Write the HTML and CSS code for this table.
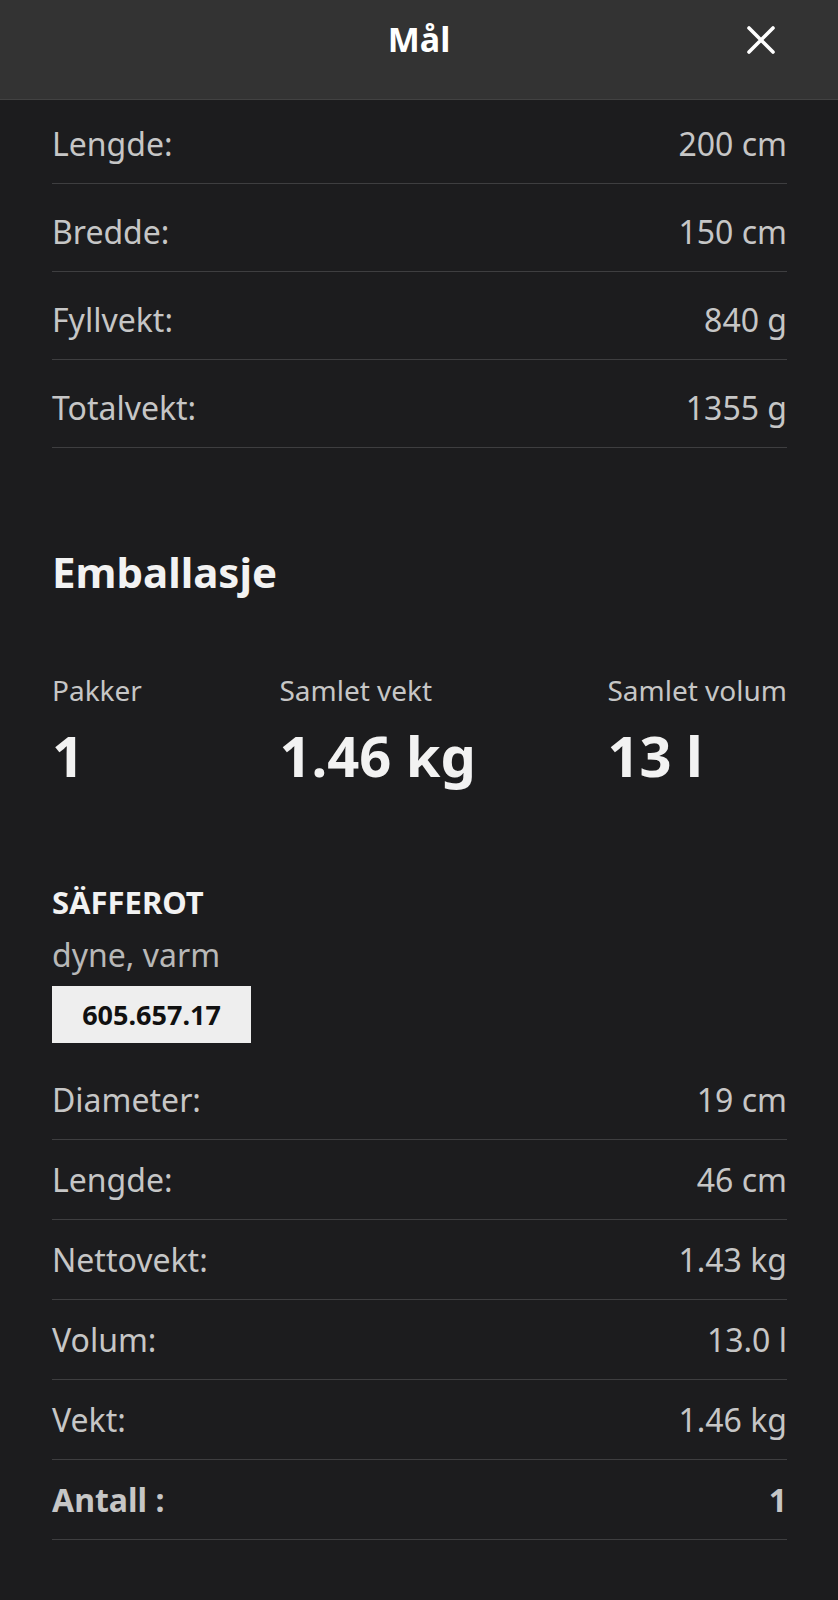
FILE: index.html
```html
<!DOCTYPE html>
<html lang="no">
<head>
<meta charset="utf-8">
<title>Mål</title>
<link rel="stylesheet" href="styles.css">
</head>
<body>
<div class="sheet">
  <header class="topbar">
    <h1 class="title">Mål</h1>
    <button class="close" aria-label="Lukk">
      <svg width="28" height="28" viewBox="0 0 28 28"><path d="M2 2 L26 26 M26 2 L2 26" stroke="#ffffff" stroke-width="3.6" stroke-linecap="round" fill="none"/></svg>
    </button>
  </header>
  <main class="content">
    <ul class="specs specs-top">
      <li class="row"><span>Lengde:</span><span>200 cm</span></li>
      <li class="row"><span>Bredde:</span><span>150 cm</span></li>
      <li class="row"><span>Fyllvekt:</span><span>840 g</span></li>
      <li class="row"><span>Totalvekt:</span><span>1355 g</span></li>
    </ul>

    <h2 class="section-title">Emballasje</h2>

    <div class="summary">
      <div class="stat"><div class="stat-label">Pakker</div><div class="stat-value">1</div></div>
      <div class="stat"><div class="stat-label">Samlet vekt</div><div class="stat-value">1.46 kg</div></div>
      <div class="stat"><div class="stat-label">Samlet volum</div><div class="stat-value">13 l</div></div>
    </div>

    <div class="product">
      <div class="product-name">SÄFFEROT</div>
      <div class="product-desc">dyne, varm</div>
      <div class="article">605.657.17</div>
    </div>

    <ul class="specs specs-bottom">
      <li class="row"><span>Diameter:</span><span>19 cm</span></li>
      <li class="row"><span>Lengde:</span><span>46 cm</span></li>
      <li class="row"><span>Nettovekt:</span><span>1.43 kg</span></li>
      <li class="row"><span>Volum:</span><span>13.0 l</span></li>
      <li class="row"><span>Vekt:</span><span>1.46 kg</span></li>
      <li class="row row-bold"><span>Antall :</span><span>1</span></li>
    </ul>
  </main>
</div>
</body>
</html>
```

FILE: styles.css
```css
* { box-sizing: border-box; }

html, body {
  margin: 0;
  padding: 0;
  background: #1c1c1e;
}

body {
  font-family: "Noto Sans", "Open Sans", sans-serif;
  color: #c6c6c6;
  min-height: 1600px;
}

.topbar {
  height: 100px;
  background: #333333;
  border-bottom: 1px solid #424242;
  display: flex;
  align-items: flex-start;
  justify-content: center;
  position: relative;
}

.title {
  margin: 0;
  padding-top: 16px;
  font-size: 34px;
  line-height: 46px;
  font-weight: 700;
  color: #ffffff;
}

.close {
  position: absolute;
  right: 63px;
  top: 26px;
  width: 28px;
  height: 28px;
  padding: 0;
  border: 0;
  background: none;
  display: flex;
}

.content {
  padding: 0 51px 0 52px;
}

.specs {
  list-style: none;
  margin: 0;
  padding: 0;
}

.row {
  display: flex;
  justify-content: space-between;
  font-size: 32px;
  line-height: 44px;
  border-bottom: 1px solid #3e3e40;
  padding: 18px 0 17px;
}

.specs-top .row { padding-top: 26px; }
.specs-top .row:first-child { padding-top: 22px; }

.specs-bottom { margin-top: 17px; }

.row-bold { font-weight: 700; }

.section-title {
  margin: 96px 0 0;
  font-size: 42px;
  line-height: 56px;
  font-weight: 700;
  color: #f2f2f2;
}

.summary {
  display: flex;
  justify-content: space-between;
  margin-top: 71px;
}

.stat:nth-child(2) { margin-left: 6px; }

.stat-label {
  font-size: 28px;
  line-height: 38px;
  color: #c6c6c6;
}

.stat-value {
  margin-top: 8px;
  font-size: 56px;
  line-height: 76px;
  font-weight: 700;
  color: #f2f2f2;
}

.product {
  margin-top: 88px;
}

.product-name {
  font-size: 31px;
  line-height: 42px;
  font-weight: 700;
  color: #f2f2f2;
}

.product-desc {
  margin-top: 10px;
  font-size: 32px;
  line-height: 44px;
  color: #b8b8b8;
}

.article {
  margin-top: 9px;
  display: inline-flex;
  align-items: center;
  justify-content: center;
  width: 199px;
  height: 57px;
  background: #eeeeee;
  color: #111111;
  font-size: 27px;
  font-weight: 700;
}
```
